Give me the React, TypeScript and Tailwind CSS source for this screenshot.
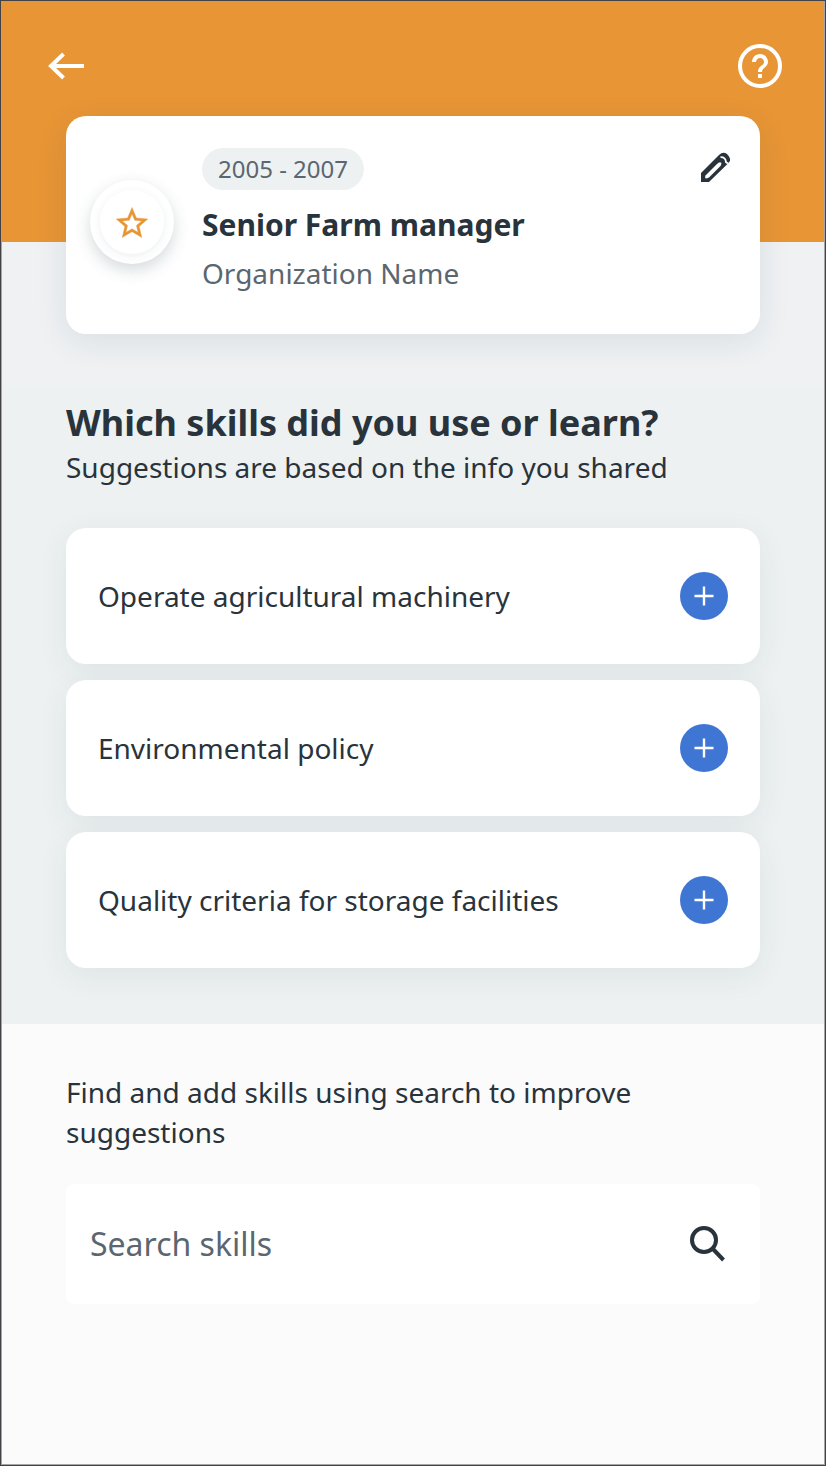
import { useState } from 'react';

const skills = [
  'Operate agricultural machinery',
  'Environmental policy',
  'Quality criteria for storage facilities',
];

function BackIcon() {
  return (
    <svg viewBox="0 0 36 28" className="w-9 h-7" fill="none" stroke="currentColor" strokeWidth="4">
      <path d="M15.5 2 3 14l12.5 12M4 14h32" />
    </svg>
  );
}

function HelpIcon() {
  return (
    <svg viewBox="1 1 22 22" className="size-11" fill="currentColor">
      <circle cx="12" cy="12" r="10" fill="none" stroke="currentColor" strokeWidth="2" />
      <path d="M11 18h2v-2h-2v2zM12 6c-2.21 0-4 1.79-4 4h2c0-1.1.9-2 2-2s2 .9 2 2c0 2-3 1.75-3 5h2c0-2.25 3-2.5 3-5 0-2.21-1.79-4-4-4z" />
    </svg>
  );
}

function StarIcon() {
  return (
    <svg
      viewBox="1.9 1.9 20.2 19.2"
      className="w-8 h-[31px]"
      fill="currentColor"
      stroke="currentColor"
      strokeWidth="0.2"
      strokeLinejoin="round"
    >
      <path d="M22 9.24l-7.19-.62L12 2 9.19 8.63 2 9.24l5.46 4.73L5.82 21 12 17.27 18.18 21l-1.63-7.03L22 9.24zM12 15.4l-3.76 2.27 1-4.28-3.32-2.88 4.38-.38L12 6.1l1.71 4.04 4.38.38-3.32 2.88 1 4.28L12 15.4z" />
    </svg>
  );
}

function PencilIcon() {
  return (
    <svg viewBox="0 0 30 30" className="size-[30px]" fill="currentColor">
      <path d="M1 30V21L19 3q4-4 8-1 4 4 3 7l-2 2.5L9 30z" />
      <path
        d="M5.5 23.5 17 12q2-2 3.6-1.6T20.500 14L9 25.500q-2 1-3.500 1-.8-1.500 0-3z"
        fill="white"
      />
      <path d="M20.500 5.200q5-.2 5.500 5l2 1.300" fill="none" stroke="white" strokeWidth="1.8" />
    </svg>
  );
}

function SearchIcon() {
  return (
    <svg viewBox="0 0 36 36" className="size-9" fill="none" stroke="currentColor" strokeWidth="4">
      <circle cx="14" cy="14" r="12" />
      <path d="m22 22 11.5 12" />
    </svg>
  );
}

function PlusIcon() {
  return (
    <svg viewBox="0 0 20 20" className="size-5" fill="none" stroke="currentColor" strokeWidth="2.4">
      <path d="M10 .5v19M.5 10h19" />
    </svg>
  );
}

export default function App() {
  const [query, setQuery] = useState('');

  return (
    <div className="min-h-screen flex flex-col border border-[#434347] bg-[#fbfbfb] font-['Noto_Sans',sans-serif] text-[#29333b]">
      <div className="grow flex flex-col border-x border-b border-[#a5a5a7]">
        <header className="h-[241px] shrink-0 bg-[#e79535] px-[46px] pt-[43px] text-white">
          <div className="flex items-center justify-between -mr-1">
            <button type="button" aria-label="Back">
              <BackIcon />
            </button>
            <button type="button" aria-label="Help">
              <HelpIcon />
            </button>
          </div>
        </header>

        <section className="bg-[#eff1f3] px-16 pb-[52px]">
          <div className="-mt-[126px] flex rounded-[20px] bg-white pt-8 pb-[37px] pl-6 pr-[30px] shadow-[0_8px_32px_#1f3d4718]">
            <div className="mt-8 flex size-[84px] items-center justify-center rounded-full bg-white shadow-[0_6px_16px_#1f3d4730]">
              <div className="flex size-16 items-center justify-center rounded-full text-[#e79535] shadow-[0_2px_8px_#1f3d4714]">
                <StarIcon />
              </div>
            </div>
            <div className="ml-7 grow">
              <p className="w-fit rounded-full bg-[#edf1f2] px-4 py-1 text-2xl leading-[34px] text-[#5b6770]">
                2005 - 2007
              </p>
              <h1 className="mt-[11px] text-[30px] leading-[48px] font-bold">Senior Farm manager</h1>
              <p className="text-[28px] leading-[48px] text-[#5b6770]">Organization Name</p>
            </div>
            <button type="button" aria-label="Edit" className="mt-1 self-start">
              <PencilIcon />
            </button>
          </div>
        </section>

        <section className="bg-[#edf1f2] px-16 pt-3 pb-14">
          <h2 className="text-4xl leading-[50px] font-bold">Which skills did you use or learn?</h2>
          <p className="text-[28px] leading-[38px]">Suggestions are based on the info you shared</p>
          <ul className="mt-[42px] space-y-4">
            {skills.map((skill) => (
              <li
                key={skill}
                className="flex h-[136px] items-center justify-between rounded-[20px] bg-white px-8 text-[28px] leading-[38px] shadow-[0_8px_32px_#1f3d4712]"
              >
                {skill}
                <button
                  type="button"
                  aria-label={`Add ${skill}`}
                  className="flex size-12 items-center justify-center rounded-full bg-[#3f76d4] text-white"
                >
                  <PlusIcon />
                </button>
              </li>
            ))}
          </ul>
        </section>

        <section className="px-16 pt-12">
          <label htmlFor="skill-search" className="block text-[28px] leading-10">
            Find and add skills using search to improve suggestions
          </label>
          <div className="mt-8 flex h-[120px] items-center rounded-lg bg-white pl-6 pr-[34px]">
            <input
              id="skill-search"
              type="text"
              value={query}
              onChange={(e) => setQuery(e.target.value)}
              placeholder="Search skills"
              className="min-w-0 grow text-[32px] outline-none placeholder:text-[#5b6770]"
            />
            <button type="button" aria-label="Search">
              <SearchIcon />
            </button>
          </div>
        </section>
      </div>
    </div>
  );
}
